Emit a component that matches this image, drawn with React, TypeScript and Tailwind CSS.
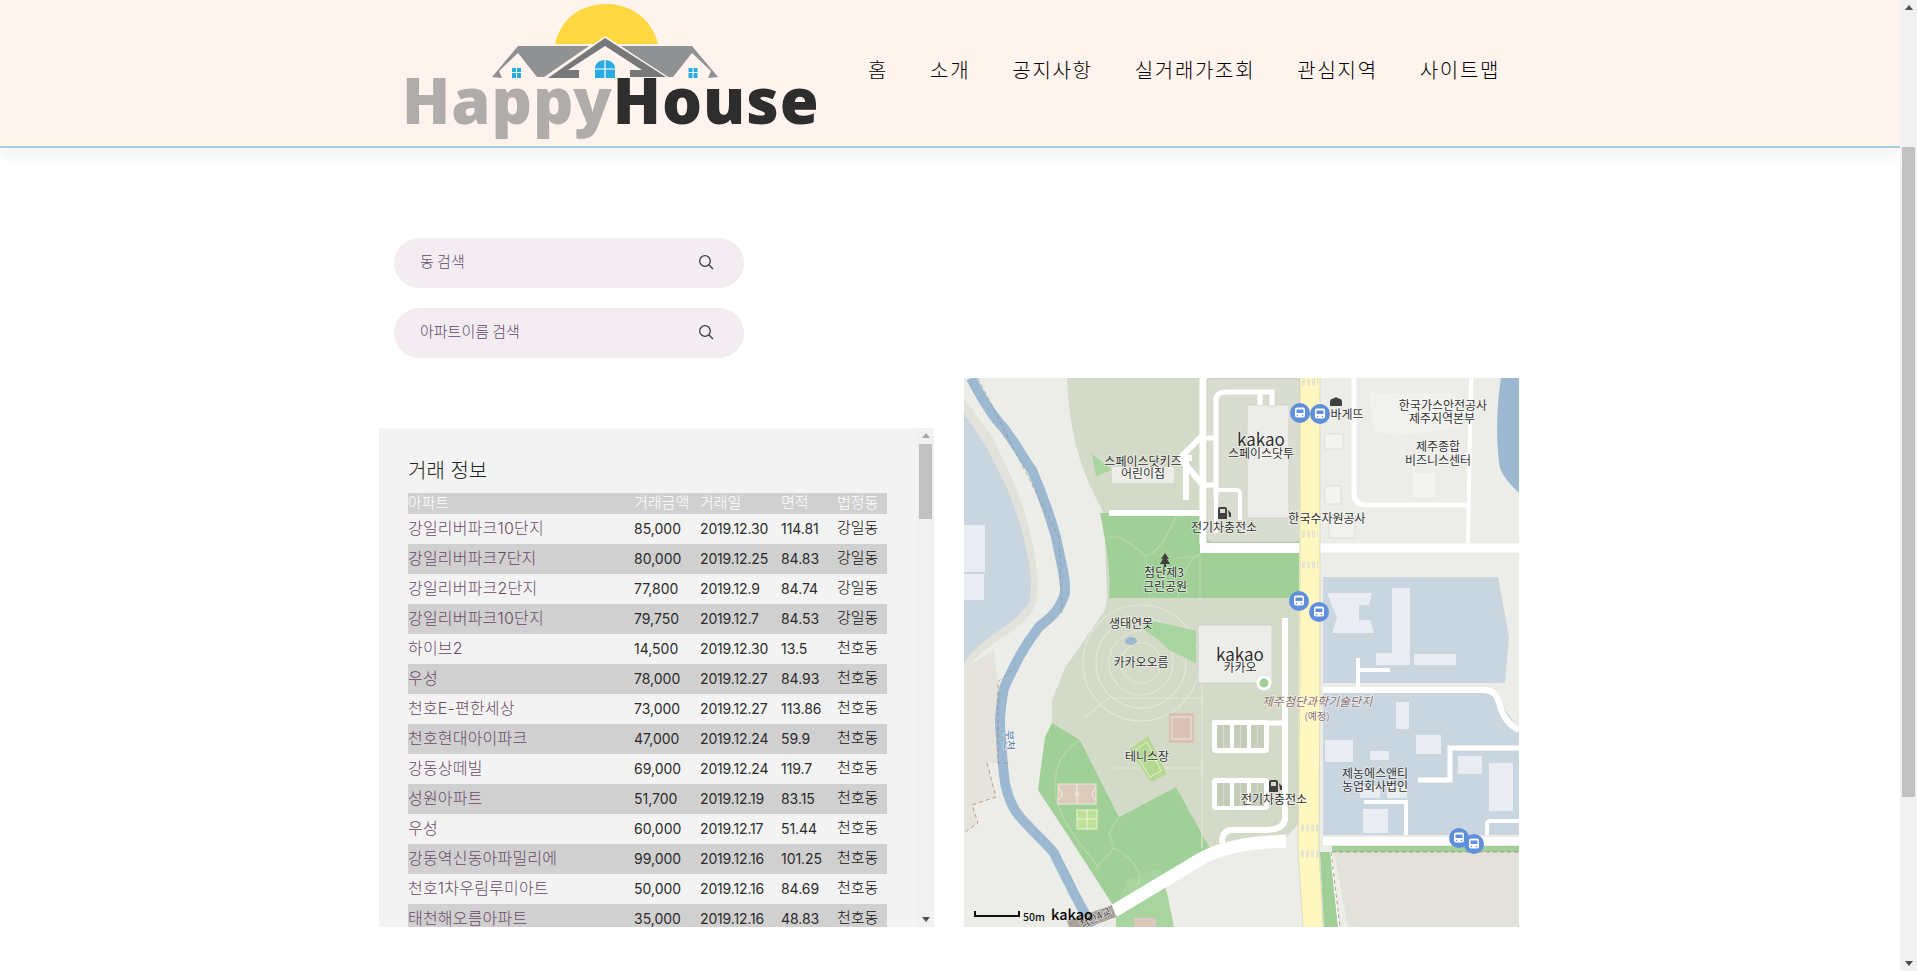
const rows = [
  ["강일리버파크10단지", "85,000", "2019.12.30", "114.81", "강일동"],
  ["강일리버파크7단지", "80,000", "2019.12.25", "84.83", "강일동"],
  ["강일리버파크2단지", "77,800", "2019.12.9", "84.74", "강일동"],
  ["강일리버파크10단지", "79,750", "2019.12.7", "84.53", "강일동"],
  ["하이브2", "14,500", "2019.12.30", "13.5", "천호동"],
  ["우성", "78,000", "2019.12.27", "84.93", "천호동"],
  ["천호E-편한세상", "73,000", "2019.12.27", "113.86", "천호동"],
  ["천호현대아이파크", "47,000", "2019.12.24", "59.9", "천호동"],
  ["강동상떼빌", "69,000", "2019.12.24", "119.7", "천호동"],
  ["성원아파트", "51,700", "2019.12.19", "83.15", "천호동"],
  ["우성", "60,000", "2019.12.17", "51.44", "천호동"],
  ["강동역신동아파밀리에", "99,000", "2019.12.16", "101.25", "천호동"],
  ["천호1차우림루미아트", "50,000", "2019.12.16", "84.69", "천호동"],
  ["태천해오름아파트", "35,000", "2019.12.16", "48.83", "천호동"],
];

const navItems = ["홈", "소개", "공지사항", "실거래가조회", "관심지역", "사이트맵"];

const labels: [number, number, string][] = [
  [179, 88, "스페이스닷키즈"],
  [179, 100, "어린이집"],
  [297, 80, "스페이스닷투"],
  [383, 41, "바게뜨"],
  [479, 32, "한국가스안전공사"],
  [478, 45, "제주지역본부"],
  [474, 73, "제주종합"],
  [474, 87, "비즈니스센터"],
  [363, 145, "한국수자원공사"],
  [260, 154, "전기차충전소"],
  [200, 199, "첨단제3"],
  [201, 213, "근린공원"],
  [167, 250, "생태연못"],
  [177, 289, "카카오오름"],
  [276, 294, "카카오"],
  [183, 383, "테니스장"],
  [411, 400, "제농에스앤티"],
  [411, 413, "농업회사법인"],
  [310, 426, "전기차충전소"],
];

const busStops = [
  [336, 35],
  [356, 36],
  [335, 223],
  [355, 234],
  [495, 460],
  [510, 466],
];

const parkingBlocks = [
  { x: 253, y: 347 },
  { x: 270, y: 347 },
  { x: 287, y: 347 },
  { x: 253, y: 405 },
  { x: 270, y: 405 },
  { x: 287, y: 405 },
];

function PageScrollbar() {
  return (
    <div className="flex h-full w-[17px] shrink-0 flex-col items-center bg-[#f1f1f1]">
      <div className="mt-[5px] h-0 w-0 border-x-[4px] border-b-[5px] border-x-transparent border-b-[#505050]" />
      <div className="mt-[137px] h-[650px] w-[13px] bg-[#c1c1c1]" />
      <div className="mt-auto mb-[5px] h-0 w-0 border-x-[4px] border-t-[5px] border-x-transparent border-t-[#505050]" />
    </div>
  );
}

function Logo() {
  return (
    <div className="relative h-[146px] w-[450px] shrink-0">
      <svg width="450" height="146" viewBox="0 0 450 146" className="absolute left-0 top-0">
        <path d="M175 44C180 20 200 4 226 4C252 4 272 20 278 44Z" fill="#ffd740" />
        <path d="M112 77L138 46H209L164 77H157L138 53L119 71L122 78Z" fill="#8f9193" />
        <path d="M338 77L312 46H241L286 77H293L312 53L331 71L328 78Z" fill="#8f9193" />
        <path d="M225 36L293 80H164Z" fill="#fff3ee" />
        <path d="M225 38L286 77H250V70H262L225 46L188 70H199V78H168Z" fill="#77787a" />
        <path d="M215 78V68C215 64 219 60 225 60C231 60 235 64 235 68V78Z" fill="#29abe2" />
        <path d="M225 60V78M215 69H235" stroke="#fff" strokeWidth="1.2" />
        <rect x="132" y="68" width="9" height="10" fill="#29abe2" />
        <path d="M136.500 68V78M132 72.500H141" stroke="#fff" strokeWidth="1" />
        <rect x="308.500" y="68" width="9" height="10" fill="#29abe2" />
        <path d="M313 68V78M308.500 72.500H317.500" stroke="#fff" strokeWidth="1" />
      </svg>
      <div className="absolute left-[22px] top-[56px] font-['Noto_Sans','Liberation_Sans',sans-serif] text-[63px] font-black leading-[88px] tracking-[1px] whitespace-nowrap">
        <span className="text-[#b0acaa]">Happy</span>
        <span className="text-[#2d2d2d]">House</span>
      </div>
    </div>
  );
}

function SearchBox({ placeholder }: { placeholder: string }) {
  return (
    <div className="flex h-[50px] w-[350px] items-center justify-between rounded-full bg-[#f3edf2] pl-[26px] pr-[30px]">
      <span className="pb-[4px] text-[15px] font-light text-[#5f4a6a]">{placeholder}</span>
      <svg width="16" height="16" viewBox="0 0 16 16" fill="none" stroke="#3b3b48" strokeWidth="1.300" className="mb-[2px]">
        <circle cx="7" cy="7" r="5.300" />
        <path d="M10.800 10.800L15 15" />
      </svg>
    </div>
  );
}

function Deal({ row, shaded }: { row: string[]; shaded: boolean }) {
  return (
    <div className={`flex h-[30px] shrink-0 items-center pb-[2px] text-[14px] text-[#2b2b2b] ${shaded ? "bg-[#d0d0d0]" : ""}`}>
      <span className="w-[226px] text-[16px] font-light tracking-[0.2px] text-[#6a4a66]">{row[0]}</span>
      <span className="w-[66px]">{row[1]}</span>
      <span className="w-[81px] tracking-[-0.15px]">{row[2]}</span>
      <span className="w-[56px] tracking-[-0.05px]">{row[3]}</span>
      <span className="text-[15px] font-light text-[#111]">{row[4]}</span>
    </div>
  );
}

function DealPanel() {
  return (
    <div className="flex h-[499px] w-[555px] overflow-hidden bg-[#f3f3f3] font-['Inter','Noto_Sans_CJK_KR',sans-serif]">
      <div className="flex flex-1 flex-col pl-[29px] pr-[30px] pt-[30px]">
        <h2 className="mb-[8px] h-[27px] text-[20px] font-light leading-[27px] text-[#222]">거래 정보</h2>
        <div className="flex h-[21px] shrink-0 items-center bg-[#d0d0d0] text-[15px] font-light text-white">
          <span className="w-[226px]">아파트</span>
          <span className="w-[66px]">거래금액</span>
          <span className="w-[81px]">거래일</span>
          <span className="w-[56px]">면적</span>
          <span>법정동</span>
        </div>
        {rows.map((row, i) => (
          <Deal key={i} row={row} shaded={i % 2 === 1} />
        ))}
      </div>
      <div className="flex h-full w-[17px] shrink-0 flex-col items-center bg-[#f1f1f1]">
        <div className="mt-[5px] h-0 w-0 border-x-[4px] border-b-[5px] border-x-transparent border-b-[#a3a3a3]" />
        <div className="mt-[6px] h-[75px] w-[13px] bg-[#c1c1c1]" />
        <div className="mt-auto mb-[5px] h-0 w-0 border-x-[4px] border-t-[5px] border-x-transparent border-t-[#505050]" />
      </div>
    </div>
  );
}

function KakaoMap() {
  return (
    <svg width="555" height="549" viewBox="0 0 555 549" className="block shrink-0 font-['Noto_Sans_CJK_KR',sans-serif]">
      <rect width="555" height="549" fill="#ecede8" />
      {/* lake and river, west side */}
      <path d="M0 20L28 58L50 105C68 150 78 200 72 225C62 255 20 262 0 295Z" fill="#e2e2da" />
      <path d="M0 35L22 68L42 108C60 150 70 195 66 222C54 248 18 256 0 285Z" fill="#c9d5df" />
      <path d="M0 290L30 272L34 304L36 385H23L32 419L8 427L14 445L0 455Z" fill="#e4e4dc" />
      <rect y="147" width="21" height="47" fill="#e9edf1" />
      <rect y="196" width="20" height="26" fill="#e9edf1" />
      <path d="M7 0C20 25 30 40 39 49C55 70 62 85 68 92C82 125 88 145 92 159C97 185 102 200 101 215C95 235 85 240 75 249C65 262 58 272 50 289C45 300 40 307 39 315C36 335 35 345 37 359C38 380 39 390 41 405C44 420 48 430 56 439C70 455 82 465 90 475C97 490 100 495 105 505C112 520 118 530 128 549" fill="none" stroke="#9db9d2" strokeWidth="10" />
      {/* campus ground */}
      <path d="M103 0H336V220H143L140 135C120 100 105 60 103 0Z" fill="#d4dac8" />
      <path d="M143 220H336V444L320 462L258 470L247 472L212 409L155 439L116 362L88 345V322L101 290L141 232Z" fill="#d4dac8" />
      {/* blocks, east side */}
      <path d="M359 199H534L545 259L541 305H359Z" fill="#c9d5df" />
      <path d="M359 315H530L555 352V457H359Z" fill="#c9d5df" />
      <path d="M370 474H555V549H384Z" fill="#e2e2da" />
      <rect x="368" y="468" width="187" height="6" fill="#a0d097" />
      <path d="M356 474H368L376 549H360Z" fill="#a0d097" />
      <path d="M537 0C532 30 532 70 536 90C540 100 548 108 555 115V0Z" fill="#9db9d2" />
      {/* park */}
      <path d="M136 135H336V220H145C147 195 143 170 136 135Z" fill="#a0d097" />
      <rect x="243" y="0" width="93" height="164" rx="5" fill="#d9ddd0" stroke="#c8cbbd" />
      <path d="M88 345L116 362L155 439L212 409L247 472L152 532L105 459L74 412L81 359Z" fill="#a0d097" />
      <path d="M163 502L195 490L203 515L210 549H152L152 532Z" fill="#a8d59f" />
      <rect x="170" y="540" width="22" height="9" fill="#dcc8bc" />
      <path d="M128 76L148 92L132 98Z" fill="#a8d59f" />
      <g fill="none" stroke="#b9d8a9" strokeWidth="1.200">
        <path d="M143 160C155 155 165 165 182 178C195 175 205 155 214 135M182 178L186 219M214 180L236 178V220M236 175C222 185 216 200 214 220" />
        <path d="M116 362C95 375 88 395 92 420C100 450 120 470 135 490M155 439L145 455L150 470L132 490M150 470C170 480 178 495 175 505L165 525" />
      </g>
      <g fill="none" stroke="#e3e6d8" strokeWidth="1.200">
        <circle cx="177" cy="285" r="20" />
        <circle cx="177" cy="285" r="32" />
        <circle cx="177" cy="285" r="45" />
        <circle cx="177" cy="285" r="58" />
        <path d="M240 320H145L120 340M238 250V470M238 390H150" />
      </g>
      <path d="M177 250L190 243L232 253L232 285L205 272L195 262Z" fill="#a8d59f" />
      <ellipse cx="167" cy="263" rx="6" ry="4" fill="#9db9d2" />
      {/* courts */}
      <rect x="205" y="335" width="25" height="30" fill="#d9c2b5" />
      <rect x="208" y="339" width="19" height="22" fill="none" stroke="#efe5dd" />
      <path d="M165 372L184 358L203 396L187 404Z" fill="#b4d88f" />
      <path d="M170 373L183 364L197 393L186 399Z" fill="none" stroke="#e8f2cf" />
      <rect x="94" y="406" width="38" height="20" fill="#dccabb" stroke="#ece8e0" />
      <path d="M113 406V426M94 410Q102 416 94 422M132 410Q124 416 132 422" fill="none" stroke="#f4ece4" />
      <circle cx="113" cy="416" r="2" fill="none" stroke="#f4ece4" />
      <rect x="113" y="432" width="20" height="19" fill="#bfe09a" stroke="#eef2d8" />
      <path d="M123 432V451M113 441H133" stroke="#eef2d8" />
      {/* buildings */}
      <rect x="283" y="27" width="42" height="113" fill="#ecede8" stroke="#d2d3cc" />
      <rect x="148" y="89" width="62" height="16" fill="#ecede8" />
      <rect x="234" y="247" width="74" height="58" fill="#ecede8" stroke="#cfd0c9" />
      <path d="M405 15H490L496 50L430 58L410 52Z" fill="#f1f2ee" />
      <rect x="361" y="56" width="18" height="15" fill="#f4f5f2" stroke="#dddcd6" />
      <rect x="361" y="108" width="16" height="18" fill="#f4f5f2" stroke="#dddcd6" />
      <rect x="365" y="138" width="26" height="22" fill="#f1f2ee" stroke="#dddcd6" />
      <rect x="450" y="95" width="20" height="24" fill="#f4f5f2" />
      <path d="M363 215H408L405 227H395V242H406L410 255H368L373 240Z" fill="#e9edf1" />
      <path d="M428 210H446V287H412V275H428Z" fill="#e9edf1" />
      <rect x="450" y="276" width="42" height="11" fill="#e9edf1" />
      <rect x="432" y="324" width="13" height="27" fill="#e9edf1" />
      <rect x="452" y="357" width="25" height="19" fill="#e9edf1" />
      <rect x="361" y="362" width="28" height="22" fill="#e9edf1" />
      <rect x="406" y="373" width="19" height="9" fill="#e9edf1" />
      <rect x="494" y="378" width="24" height="18" fill="#e9edf1" />
      <rect x="525" y="385" width="24" height="48" fill="#e9edf1" />
      <rect x="396" y="408" width="20" height="12" fill="#e9edf1" />
      <rect x="423" y="408" width="20" height="12" fill="#e9edf1" />
      <rect x="399" y="431" width="25" height="24" fill="#e9edf1" />
      {/* roads */}
      <g fill="none" stroke="#ffffff" strokeWidth="5">
        <path d="M239 0V166" strokeWidth="7" />
        <path d="M236 170H336" strokeWidth="10" />
        <path d="M145 135H239" strokeWidth="6" />
        <path d="M252 120V22Q252 14 262 14H308V27M296 14V27" />
        <path d="M239 60H252M239 107H252" />
        <path d="M216 80L238 58M216 80L238 106M216 80H228M222 80V122" strokeWidth="6" />
        <path d="M252 112H272Q276 112 276 116V142M252 112V155" strokeWidth="4" />
        <path d="M390 0V115Q390 127 402 127H503" />
        <path d="M507 0L504 165" strokeWidth="4" />
        <path d="M356 170H555" strokeWidth="9" />
        <path d="M321 240V440Q321 452 300 452H268Q258 452 258 465" strokeWidth="6" />
        <path d="M359 312H520Q532 312 535 325Q540 345 555 352" strokeWidth="6" />
        <path d="M394 280V312M394 292H426" strokeWidth="4" />
        <path d="M454 402H486V370H555" />
        <path d="M400 424H442V457" strokeWidth="4" />
        <path d="M523 457V446Q523 443 527 443H555" strokeWidth="4" />
        <path d="M359 463H555" strokeWidth="8" />
        <path d="M367 474L375 549" strokeWidth="2" />
        <path d="M248 345H320" strokeWidth="5" />
        <path d="M322 463C280 465 255 470 235 482L150 533" strokeWidth="13" />
      </g>
      <path d="M150 533L105 549" stroke="#a9a39c" strokeWidth="13" />
      <rect x="248" y="342" width="57" height="33" rx="4" fill="#ffffff" />
      <rect x="248" y="400" width="57" height="32" rx="4" fill="#ffffff" />
      {parkingBlocks.map((b, i) => (
        <g key={i}>
          <rect x={b.x} y={b.y} width="13" height="23" fill="#c5ccb8" />
          <path d={`M${b.x + 6.500} ${b.y}v23`} stroke="#d9ddd0" />
        </g>
      ))}
      <path d="M336 0H356V300L355 470L359 549H339L334 470Z" fill="#fff7c0" />
      <path d="M336 0V300L334 470L339 549M356 0V300L355 470L359 549" fill="none" stroke="#c9c9b8" strokeWidth="0.600" />
      <g stroke="#e6e6d0" strokeWidth="7" strokeDasharray="3 2">
        <path d="M338 4H354" />
        <path d="M338 156H354" />
        <path d="M338 187H354" />
        <path d="M337 450H355" />
        <path d="M337 476H355" />
      </g>
      <circle cx="300" cy="305" r="6" fill="#a0d097" stroke="#fff" strokeWidth="3" />
      <g fill="none" stroke="#a8857a" strokeWidth="0.800" strokeDasharray="4 3">
        <path d="M367 474L376 549M368 474H555" />
        <path d="M48 292L34 304V385H44M23 385L32 419L8 427L14 445L0 455" />
        <path d="M14 0L95 160L98 235" stroke="#8a7f73" strokeWidth="0.500" />
      </g>
      {/* labels */}
      <g fontSize="12" textAnchor="middle" fill="#2f2f2f" stroke="#ffffff" strokeWidth="1.500" paintOrder="stroke" strokeOpacity="0.600">
        {labels.map(([x, y, text], i) => (
          <text key={i} x={x} y={y}>
            {text}
          </text>
        ))}
        <text x="297" y="68" fontSize="17">kakao</text>
        <text x="276" y="283" fontSize="17">kakao</text>
        <text x="353" y="328" fontSize="12" fontStyle="italic" fill="#8b6f6a">제주첨단과학기술단지</text>
        <text x="353" y="342" fontSize="10" fill="#8b6f6a">(예정)</text>
        <text x="41" y="352" fontSize="11" fill="#4f7ea8" transform="rotate(90 41 352)" textAnchor="start">부천</text>
        <text x="0" y="0" fontSize="10" fill="#3a3a3a" transform="translate(133 543) rotate(-28)">첨단4교</text>
      </g>
      {/* pois */}
      <g fill="#404040">
        <path d="M254 141V131Q254 129 256 129H261Q263 129 263 131V141ZM256 131V135H261V131ZM264 132L267 135V139H265" fillRule="evenodd" />
        <path d="M305 414V404Q305 402 307 402H312Q314 402 314 404V414ZM307 404V408H312V404ZM315 405L318 408V412H316" fillRule="evenodd" />
        <path d="M201 175L197 181H199L196 186H200V189H202V186H206L203 181H205Z" />
        <path d="M366 28V24C366 21 368 20 369 21C370 19 374 19 375 21C376 20 378 21 378 24V28Z" />
      </g>
      {busStops.map(([x, y], i) => (
        <g key={i}>
          <circle cx={x} cy={y} r="10" fill="#5f8fdc" />
          <rect x={x - 5} y={y - 5.500} width="10" height="10" rx="2" fill="#fff" />
          <rect x={x - 3.500} y={y - 3.500} width="7" height="3.500" fill="#5f8fdc" />
          <circle cx={x - 2.500} cy={y + 2.500} r="0.800" fill="#5f8fdc" />
          <circle cx={x + 2.500} cy={y + 2.500} r="0.800" fill="#5f8fdc" />
        </g>
      ))}
      {/* scale and logo */}
      <path d="M11 533V538H55V533" fill="none" stroke="#111" strokeWidth="2" />
      <text x="59" y="543" fontSize="10.500" fontWeight="500" fill="#111">50m</text>
      <text x="87" y="542" fontSize="14.500" fontWeight="500" fill="#000">kakao</text>
    </svg>
  );
}

export default function App() {
  return (
    <div className="flex h-[971px] w-full overflow-hidden bg-white font-['Noto_Sans_CJK_KR','Inter',sans-serif]">
      <main className="min-w-0 flex-1">
        <header className="h-[148px] border-b-2 border-[#a3cfdf] bg-[#fff3ee] shadow-[0_8px_16px_rgba(0,0,0,0.06)]">
          <div className="flex h-[146px] items-start pl-[380px]">
            <Logo />
            <nav className="mt-[55px] ml-[38px] flex gap-[42px] text-[20px] font-light leading-[30px] tracking-[1.7px] text-black">
              {navItems.map((item) => (
                <span key={item}>{item}</span>
              ))}
            </nav>
          </div>
        </header>
        <section className="flex flex-col pl-[379px] pt-[90px]">
          <div className="flex flex-col gap-[20px] pl-[15px]">
            <SearchBox placeholder="동 검색" />
            <SearchBox placeholder="아파트이름 검색" />
          </div>
          <div className="mt-[20px] flex h-[549px] items-end gap-[30px]">
            <DealPanel />
            <KakaoMap />
          </div>
        </section>
      </main>
      <PageScrollbar />
    </div>
  );
}
